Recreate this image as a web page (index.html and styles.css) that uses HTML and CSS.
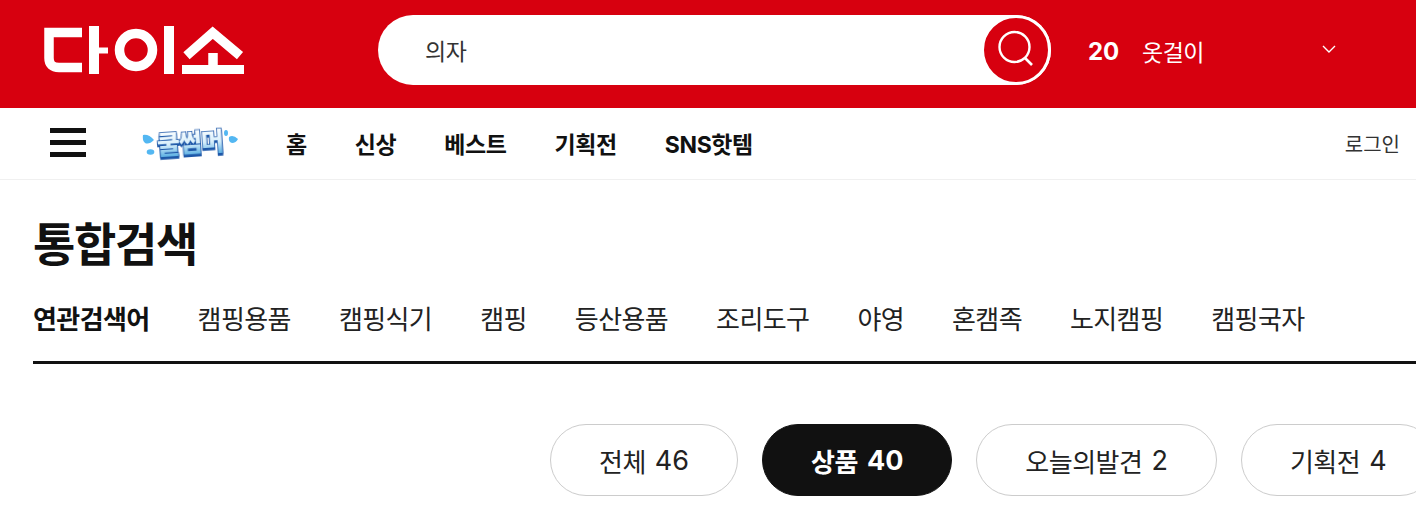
FILE: index.html
```html
<!DOCTYPE html>
<html lang="ko">
<head>
<meta charset="utf-8">
<title>다이소 통합검색</title>
<link rel="stylesheet" href="styles.css">
</head>
<body>
<header class="top">
  <a class="logo" href="#" aria-label="다이소">
    <svg width="202" height="48" viewBox="0 0 202 48" fill="none" stroke="#fff">
      <path d="M39 6.500H6V32Q6 41.500 16 41.500H39" stroke-width="9.500"/>
      <path d="M51 0V48" stroke-width="10"/>
      <path d="M56 24.500H65" stroke-width="6"/>
      <circle cx="93" cy="24" r="16.500" stroke-width="9.500"/>
      <path d="M126 0V48" stroke-width="10"/>
      <path d="M143.500 29.700L169.700 6.700L197 29.700" stroke-width="9.500"/>
      <path d="M170 27V42" stroke-width="9.500"/>
      <path d="M139 43.500H201" stroke-width="9"/>
    </svg>
  </a>
  <form class="search">
    <span class="search-text">의자</span>
    <button class="search-btn" type="button" aria-label="검색">
      <svg width="40" height="40" viewBox="0 0 40 40" fill="none" stroke="#fff" stroke-width="2.400">
        <circle cx="18.500" cy="17" r="15"/>
        <path d="M29 28L36 35" stroke-width="2.600"/>
      </svg>
    </button>
  </form>
  <div class="rank">
    <strong class="rank-num">20</strong>
    <span class="rank-word">옷걸이</span>
    <svg class="rank-arrow" width="16" height="10" viewBox="0 0 16 10" fill="none" stroke="#fff" stroke-width="1.400">
      <path d="M2 2L8 8L14 2"/>
    </svg>
  </div>
</header>
<nav class="gnb">
  <button class="burger" type="button" aria-label="메뉴"><i></i><i></i><i></i></button>
  <a class="season" href="#">
    <svg width="100" height="34" viewBox="0 0 100 34">
      <defs>
        <linearGradient id="coolFill" x1="0" y1="0" x2="0" y2="1">
          <stop offset="0" stop-color="#ffffff"/>
          <stop offset="0.500" stop-color="#d8effb"/>
          <stop offset="1" stop-color="#3b9fdc"/>
        </linearGradient>
      </defs>
      <g fill="#53b7f2">
        <path d="M2 8Q8 7 13 13Q8 18 4 16Q1 13 2 8Z"/>
        <ellipse cx="9.500" cy="25" rx="3.800" ry="2.800"/>
        <path d="M97 12Q92 7 88 10Q87 15 91 16Q95 16 97 12Z"/>
        <ellipse cx="85" cy="6" rx="2" ry="3"/>
      </g>
      <text class="season-text" x="16" y="25" transform="rotate(-4 50 17)" fill="url(#coolFill)">쿨썸머</text>
    </svg>
  </a>
  <ul class="menu">
    <li>홈</li>
    <li>신상</li>
    <li>베스트</li>
    <li>기획전</li>
    <li>SNS핫템</li>
  </ul>
  <a class="login" href="#">로그인</a>
</nav>
<main class="content">
  <h1 class="title">통합검색</h1>
  <div class="related">
    <strong class="related-label">연관검색어</strong>
    <a href="#">캠핑용품</a>
    <a href="#">캠핑식기</a>
    <a href="#">캠핑</a>
    <a href="#">등산용품</a>
    <a href="#">조리도구</a>
    <a href="#">야영</a>
    <a href="#">혼캠족</a>
    <a href="#">노지캠핑</a>
    <a href="#">캠핑국자</a>
  </div>
  <div class="tabs">
    <a class="tab" href="#">전체<span class="count">46</span></a>
    <a class="tab active" href="#">상품<span class="count">40</span></a>
    <a class="tab" href="#">오늘의발견<span class="count">2</span></a>
    <a class="tab" href="#">기획전<span class="count">4</span></a>
  </div>
</main>
</body>
</html>
```
FILE: styles.css
```css
* { box-sizing: border-box; }
html, body { margin: 0; padding: 0; overflow: hidden; background: #fff; }
body {
  font-family: "Inter", "Noto Sans CJK KR", "Noto Sans", sans-serif;
  color: #111;
  width: 1416px;
  height: 513px;
}
a { color: inherit; text-decoration: none; }

.top {
  height: 108px;
  background: #d7000f;
  display: flex;
  align-items: flex-start;
  padding: 15px 0 0 43px;
}
.logo { display: block; width: 202px; height: 48px; margin-top: 11px; }
.search {
  margin-left: 133px;
  width: 673px;
  height: 70px;
  border-radius: 35px;
  background: #fff;
  display: flex;
  align-items: center;
  justify-content: space-between;
  padding-left: 47px;
}
.search-text { font-size: 23px; color: #333; letter-spacing: -0.5px; }
.search-btn {
  width: 70px;
  height: 70px;
  border-radius: 50%;
  background: #d7000f;
  border: 3px solid #fff;
  padding: 0;
  display: flex;
  align-items: center;
  justify-content: center;
}
.rank {
  display: flex;
  align-items: center;
  height: 70px;
  color: #fff;
  margin-left: 37px;
  margin-top: 1px;
  width: 250px;
  position: relative;
}
.rank-num { font-size: 24px; font-weight: 700; width: 54px; }
.rank-word { font-size: 23px; letter-spacing: -0.5px; }
.rank-arrow { position: absolute; left: 233px; top: 28px; }

.gnb {
  height: 72px;
  border-bottom: 1px solid #f0f0f0;
  display: flex;
  align-items: center;
  padding-left: 50px;
  padding-right: 16px;
}
.burger {
  width: 36px;
  height: 29px;
  padding: 0;
  margin: 0 0 2px;
  border: 0;
  background: none;
  display: flex;
  flex-direction: column;
  justify-content: space-between;
}
.burger i { display: block; height: 5px; background: #111; }
.season { display: block; height: 34px; margin-left: 55px; }
.season svg { display: block; overflow: visible; }
.season-text {
  font-size: 25px;
  font-weight: 900;
  letter-spacing: -1px;
  stroke: #1d57a8;
  stroke-width: 1.500px;
  paint-order: stroke;
  filter: drop-shadow(0 2px 0 #1d57a8);
}
.menu {
  list-style: none;
  margin: 0 0 2px 45px;
  padding: 0;
  display: flex;
  gap: 48px;
  font-size: 23px;
  font-weight: 700;
  letter-spacing: -0.4px;
}
.login { margin-left: auto; font-size: 20px; color: #333; }

.content { padding: 0 0 0 33px; }
.title {
  margin: 0;
  padding-top: 33px;
  font-size: 46px;
  line-height: 62px;
  font-weight: 700;
  letter-spacing: -1.300px;
}
.related {
  margin-top: 19px;
  height: 70px;
  border-bottom: 3px solid #111;
  display: flex;
  gap: 48px;
  font-size: 26px;
  letter-spacing: -0.6px;
  line-height: 52px;
  align-items: flex-start;
  color: #222;
}
.related-label { font-weight: 700; color: #111; }
.tabs {
  display: flex;
  gap: 24px;
  margin-top: 60px;
  margin-left: 517px;
  width: max-content;
}
.tab {
  height: 72px;
  padding: 0 48px;
  border: 1px solid #ccc;
  border-radius: 36px;
  display: flex;
  align-items: center;
  gap: 9px;
  font-size: 26px;
  letter-spacing: -0.5px;
  color: #222;
  white-space: nowrap;
}
.count { font-size: 27px; letter-spacing: 0; }
.tab.active {
  background: #111;
  border-color: #111;
  color: #fff;
  font-weight: 700;
}
```
